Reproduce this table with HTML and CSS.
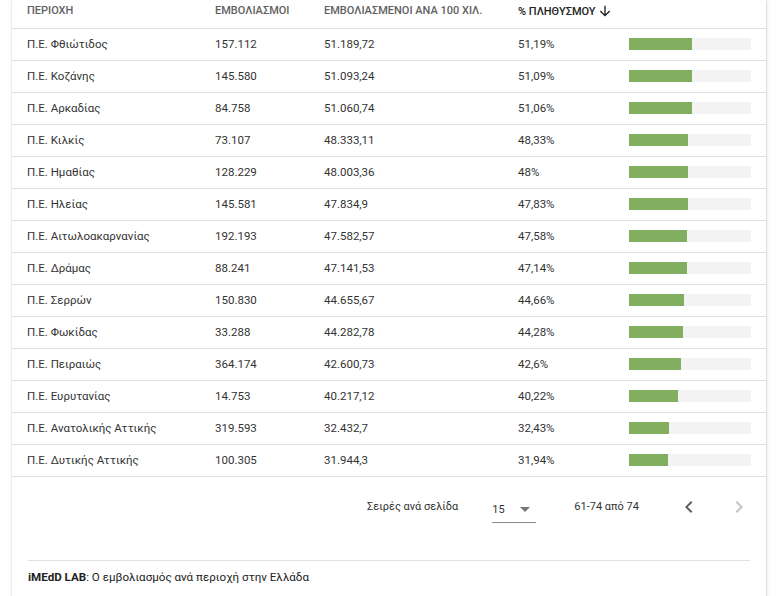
FILE: index.html
```html
<!DOCTYPE html>
<html lang="el">
<head>
<meta charset="utf-8">
<link rel="stylesheet" href="styles.css">
</head>
<body>
<div class="card">
  <table class="grid">
    <thead>
      <tr>
        <th class="c1">ΠΕΡΙΟΧΗ</th>
        <th class="c2">ΕΜΒΟΛΙΑΣΜΟΙ</th>
        <th class="c3">ΕΜΒΟΛΙΑΣΜΕΝΟΙ ΑΝΑ 100 ΧΙΛ.</th>
        <th class="c4 sorted">% ΠΛΗΘΥΣΜΟΥ <svg class="sort" width="14" height="14" viewBox="0 0 24 24"><path d="M12 3v17M4 12l8 8 8-8" fill="none" stroke="#222" stroke-width="2.3"/></svg></th>
        <th class="c5"></th>
      </tr>
    </thead>
    <tbody>
      <tr><td>Π.Ε. Φθιώτιδος</td><td>157.112</td><td>51.189,72</td><td>51,19%</td><td><div class="bar"><div class="fill" style="width:51.6%"></div></div></td></tr>
      <tr><td>Π.Ε. Κοζάνης</td><td>145.580</td><td>51.093,24</td><td>51,09%</td><td><div class="bar"><div class="fill" style="width:51.5%"></div></div></td></tr>
      <tr><td>Π.Ε. Αρκαδίας</td><td>84.758</td><td>51.060,74</td><td>51,06%</td><td><div class="bar"><div class="fill" style="width:51.5%"></div></div></td></tr>
      <tr><td>Π.Ε. Κιλκίς</td><td>73.107</td><td>48.333,11</td><td>48,33%</td><td><div class="bar"><div class="fill" style="width:48.5%"></div></div></td></tr>
      <tr><td>Π.Ε. Ημαθίας</td><td>128.229</td><td>48.003,36</td><td>48%</td><td><div class="bar"><div class="fill" style="width:48.3%"></div></div></td></tr>
      <tr><td>Π.Ε. Ηλείας</td><td>145.581</td><td>47.834,9</td><td>47,83%</td><td><div class="bar"><div class="fill" style="width:48.1%"></div></div></td></tr>
      <tr><td>Π.Ε. Αιτωλοακαρνανίας</td><td>192.193</td><td>47.582,57</td><td>47,58%</td><td><div class="bar"><div class="fill" style="width:47.8%"></div></div></td></tr>
      <tr><td>Π.Ε. Δράμας</td><td>88.241</td><td>47.141,53</td><td>47,14%</td><td><div class="bar"><div class="fill" style="width:47.5%"></div></div></td></tr>
      <tr><td>Π.Ε. Σερρών</td><td>150.830</td><td>44.655,67</td><td>44,66%</td><td><div class="bar"><div class="fill" style="width:45%"></div></div></td></tr>
      <tr><td>Π.Ε. Φωκίδας</td><td>33.288</td><td>44.282,78</td><td>44,28%</td><td><div class="bar"><div class="fill" style="width:44.3%"></div></div></td></tr>
      <tr><td>Π.Ε. Πειραιώς</td><td>364.174</td><td>42.600,73</td><td>42,6%</td><td><div class="bar"><div class="fill" style="width:42.6%"></div></div></td></tr>
      <tr><td>Π.Ε. Ευρυτανίας</td><td>14.753</td><td>40.217,12</td><td>40,22%</td><td><div class="bar"><div class="fill" style="width:40.2%"></div></div></td></tr>
      <tr><td>Π.Ε. Ανατολικής Αττικής</td><td>319.593</td><td>32.432,7</td><td>32,43%</td><td><div class="bar"><div class="fill" style="width:32.8%"></div></div></td></tr>
      <tr><td>Π.Ε. Δυτικής Αττικής</td><td>100.305</td><td>31.944,3</td><td>31,94%</td><td><div class="bar"><div class="fill" style="width:32%"></div></div></td></tr>
    </tbody>
  </table>
  <div class="pager">
    <span class="label">Σειρές ανά σελίδα</span>
    <div class="select"><span>15</span><svg width="10" height="5" viewBox="0 0 10 5"><path d="M0 0h10L5 5z" fill="#757575"/></svg></div>
    <span class="range">61-74 από 74</span>
    <svg class="nav" width="24" height="24" viewBox="0 0 24 24"><path d="M15.4 7.4L14 6l-6 6 6 6 1.4-1.4L10.8 12z" fill="#5f5f5f"/></svg>
    <svg class="nav" width="24" height="24" viewBox="0 0 24 24"><path d="M10 6L8.6 7.4 13.2 12l-4.6 4.6L10 18l6-6z" fill="#c4c4c4"/></svg>
  </div>
  <div class="footer"><b>iMEdD LAB</b>: Ο εμβολιασμός ανά περιοχή στην Ελλάδα</div>
</div>
</body>
</html>
```
FILE: styles.css
```css
html, body {
  margin: 0;
  padding: 0;
  background: #fff;
}
body {
  font-family: Roboto, "Noto Sans", sans-serif;
  color: #333;
  overflow: hidden;
}
.card {
  margin: 0 10px 0 12px;
  background: #fff;
  box-shadow: 0 0 2px rgba(0,0,0,0.22), 2px 0 4px rgba(0,0,0,0.06);
  height: 600px;
}
.grid {
  width: 100%;
  border-collapse: collapse;
  table-layout: fixed;
}
.grid th {
  height: 28px;
  padding: 0 0 6px 15px;
  text-align: left;
  font-size: 11px;
  font-weight: 500;
  color: #616161;
  border-bottom: 1px solid #e0e0e0;
  box-sizing: border-box;
  vertical-align: middle;
  white-space: nowrap;
}
.grid th.sorted { color: #222; padding-left: 0; }
.grid th.c1 { width: 203px; }
.grid th.c2 { width: 109px; padding-left: 0; }
.grid th.c3 { width: 194px; padding-left: 0; }
.grid th.c4 { width: 111px; }
.grid th.c5 { padding-left: 0; }
.sort { vertical-align: -3px; }
.grid td {
  height: 32px;
  padding: 0;
  font-size: 11.5px;
  color: #333;
  border-bottom: 1px solid #e0e0e0;
  box-sizing: border-box;
  white-space: nowrap;
}
.grid td:first-child { padding-left: 15px; }
.bar {
  width: 122px;
  height: 12px;
  background: #f3f3f3;
}
.fill {
  height: 100%;
  background: #82ae5f;
}
.pager {
  height: 60px;
  display: flex;
  align-items: center;
  font-size: 11px;
  color: #333;
  padding-top: 0;
  box-sizing: border-box;
}
.label { margin-left: 355px; }
.select {
  margin-left: 34px;
  width: 44px;
  height: 26px;
  display: flex;
  align-items: center;
  justify-content: space-between;
  padding: 0 6px 0 0;
  box-sizing: border-box;
  border-bottom: 1px solid #8a8a8a;
  margin-top: 6px;
}
.range { margin-left: 38px; }
.nav { margin-left: 38px; }
.nav + .nav { margin-left: 26px; }
.footer {
  margin: 23px 16px 0 16px;
  border-top: 1px solid #e0e0e0;
  padding-top: 9px;
  font-size: 11.6px;
  color: #222;
}
.footer b { font-weight: 700; }
```
